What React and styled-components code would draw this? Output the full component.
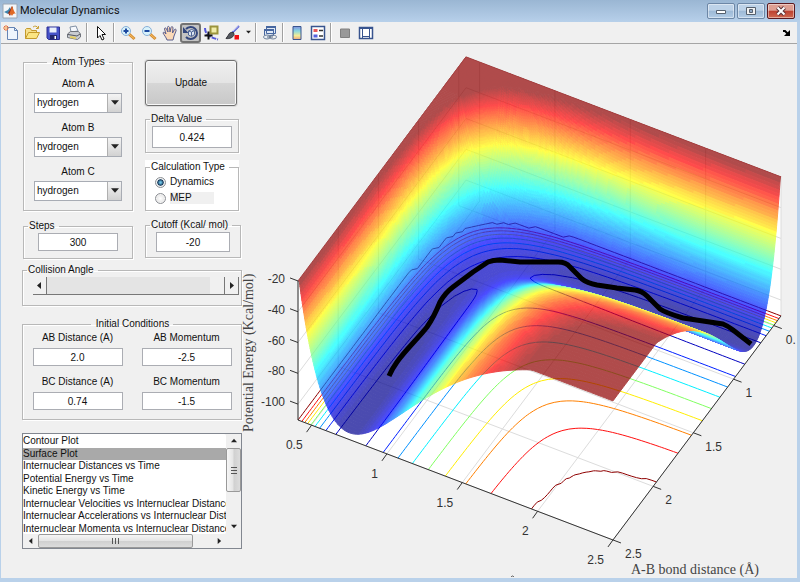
import React, { useState } from 'react'
import styled, { createGlobalStyle, css } from 'styled-components'

const GlobalStyle = createGlobalStyle`
  * { box-sizing: border-box; }
  body {
    margin: 0;
    font-family: "Liberation Sans", Arial, sans-serif;
    font-size: 10px;
    line-height: 14px;
    color: #111;
  }
  button, input, select { font: inherit; color: inherit; }
`

const Window = styled.div`
  display: flex;
  flex-direction: column;
  min-height: 100vh;
  padding: 0 3px 4px 1px;
  background: #b9d1ea;
`

const TitleBar = styled.header`
  display: flex;
  align-items: center;
  height: 22px;
  margin: 0 -3px 0 -1px;
  padding: 0 5px 0 2px;
  gap: 2px;
  background: linear-gradient(#9ab6d3, #b7d0ea);
`

const Title = styled.h1`
  flex: 1;
  margin: 0;
  font: 11px/16px Roboto, sans-serif;
`

const WindowButtons = styled.div`
  display: flex;
  gap: 2px;
  align-self: flex-start;
  padding-top: 3px;
`

const WindowButton = styled.button`
  display: flex;
  align-items: center;
  justify-content: center;
  width: 28px;
  height: 16px;
  padding: 0;
  border: 1px solid ${({ close }) => (close ? '#5b1a20' : '#6d87a6')};
  border-radius: 2px;
  box-shadow: inset 0 0 0 1px rgba(255, 255, 255, 0.45);
  background: ${({ close }) =>
    close
      ? 'linear-gradient(#dd9f92 45%, #bd4030 50%, #cf6950)'
      : 'linear-gradient(#bdd2e8 45%, #9db9d6 50%, #b2cce6)'};
`

const Toolbar = styled.div`
  display: flex;
  align-items: center;
  height: 22px;
  background: #f0f0f0;
  border-bottom: 1px solid #a5a5a5;
`

const Tool = styled.button`
  display: flex;
  align-items: center;
  justify-content: center;
  width: 21px;
  height: 20px;
  padding: 0;
  border: 0;
  background: none;
  ${({ pressed }) =>
    pressed &&
    css`
      border: 2px solid #737373;
      border-radius: 3px;
      background: #c3c3c3;
    `}
`

const DropArrow = styled(Tool)`width: 10px;`

const Separator = styled.span`
  width: 2px;
  height: 19px;
  margin: 0 2px;
  border-left: 1px solid #a0a0a0;
  border-right: 1px solid #fff;
`

const Tools = styled.div`
  display: flex;
  flex: 1;
  align-items: center;
  margin-left: -1px;
`

const Spacer = styled.span`flex: 1;`

const Content = styled.main`
  display: flex;
  flex: 1;
  background: #f0f0f0;
`

const Controls = styled.form`
  display: flex;
  flex-direction: column;
  flex: none;
  width: 241px;
  padding: 11px 0 0 21px;
`

const Columns = styled.div`
  display: grid;
  grid-template-columns: 111px 96px;
  column-gap: 12px;
`

const Column = styled.div`
  display: flex;
  flex-direction: column;
  padding: ${({ inset }) => (inset ? '5px 0 0' : '0 0 0 1px')};
`

const Group = styled.fieldset`
  min-width: 0;
  margin: 0;
  padding: ${({ pad }) => pad};
  border: 1px solid #b8b8b8;
  box-shadow: 1px 1px 0 #fff, inset 1px 1px 0 #fff;
`

const Legend = styled.legend`
  height: 14px;
  margin: ${({ centered }) => (centered ? '0 auto' : '0 0 0 4px')};
  padding: 0 4px 0 1px;
  text-indent: ${({ centered }) => (centered ? '4px' : '0')};
  white-space: nowrap;
`

const AtomGroup = styled(Group)`
  display: flex;
  flex-direction: column;
  align-items: center;
  margin-bottom: 8px;
`

const AtomField = styled.label`
  display: flex;
  flex-direction: column;
  align-items: center;
  gap: 2px;
  margin-top: 8px;
`

const SelectBox = styled.span`
  display: grid;
  grid-template-columns: 72px 14px;
  height: 20px;
  border: 1px solid #a8acb4;
  background: #fff;
`

const Select = styled.select`
  grid-area: 1 / 1 / 2 / 3;
  appearance: none;
  width: 86px;
  padding: 0 14px 0 2px;
  border: 0;
  outline: 0;
  background: none;
`

const SelectArrow = styled.span`
  grid-area: 1 / 2;
  display: flex;
  align-items: center;
  justify-content: center;
  border-left: 1px solid #b0b0b0;
  background: linear-gradient(#f4f4f4, #d2d2d2);
  pointer-events: none;
`

const UpdateButton = styled.button`
  width: 92px;
  height: 46px;
  margin-bottom: 6px;
  border: 1px solid #707070;
  border-radius: 3px;
  box-shadow: inset 0 0 0 1px #f8f8f8, 0 0 0 1px #dcdcdc;
  background: linear-gradient(#f0f0f0, #e4e4e4 49%, #d6d6d6 50%, #c8c8c8);
`

const TextBox = styled.input`
  width: ${({ wide }) => (wide ? '90px' : '80px')};
  height: ${({ tall }) => (tall ? '22px' : '18px')};
  padding: 0;
  border: 1px solid #abadb3;
  background: #fff;
  text-align: center;
`

const CutoffBox = styled(TextBox)`
  width: 74px;
  height: 20px;
`

const SmallGroup = styled(Group)`
  display: flex;
  justify-content: center;
`

const DeltaGroup = styled(SmallGroup)`width: 94px;`

const WhiteBox = styled.div`
  width: 94px;
  margin: 7px 0;
  background: #fff;
`

const RadioLabel = styled.label`
  display: flex;
  align-items: center;
  gap: 4px;
  height: 16px;
  padding-left: 9px;
`

const RadioText = styled.span`
  flex: none;
  width: 44px;
  height: 12px;
  line-height: 12px;
  background: ${({ shaded }) => (shaded ? '#f0f0f0' : 'none')};
`

const Radio = styled.input`
  appearance: none;
  width: 11px;
  height: 11px;
  margin: 0;
  border: 1px solid #8c8f94;
  border-radius: 50%;
  background: radial-gradient(#fff, #d8d8d8);
  box-shadow: inset 0 0 0 1px #f4f4f4;
  &:checked {
    background: radial-gradient(#6fc5e8 10%, #16385a 45%, #dfe7ec 58%);
  }
`

const AngleGroup = styled(Group)`
  margin: 4px 0 11px;
`

const Slider = styled.div`
  display: flex;
  height: 18px;
  margin: 0 2px 0 10px;
  border-bottom: 1px solid #777;
`

const SliderButton = styled.button`
  display: flex;
  align-items: center;
  justify-content: center;
  width: 14px;
  padding: 0;
  border: 0;
  border-right: 1px solid #777;
  background: #f0f0f0;
`

const Range = styled.input`
  appearance: none;
  flex: 1;
  min-width: 0;
  height: 17px;
  margin: 0;
  background: #e4e4e4;
  outline: 0;
  &::-webkit-slider-thumb {
    appearance: none;
    width: 15px;
    height: 17px;
    border-right: 1px solid #777;
    background: #f0f0f0;
  }
`

const Conditions = styled(Group)`margin-bottom: 13px;`

const ConditionGrid = styled.div`
  display: grid;
  grid-template-columns: 1fr 1fr;
  row-gap: 9px;
`

const ConditionField = styled.label`
  display: flex;
  flex-direction: column;
  align-items: center;
  gap: 3px;
`

const ListFrame = styled.div`
  display: grid;
  grid-template-columns: 1fr 15px;
  grid-template-rows: 100px 14px;
  border: 1px solid #828790;
  background: #f0f0f0;
`

const ListBox = styled.select`
  width: 100%;
  height: 100%;
  padding: 1px 0 0;
  border: 0;
  outline: 0;
  overflow: hidden;
  background: #fff;
  scrollbar-width: none;
`

const ListOption = styled.option`
  min-height: 12px;
  height: 12px;
  padding: 0;
  line-height: 12px;
  color: #111;
  &:nth-child(odd) {
    height: 13px;
  }
  &:checked {
    color: #111;
    background: #a9a9a9 linear-gradient(#a9a9a9, #a9a9a9);
  }
`

const ScrollBar = styled.div`
  display: flex;
  flex-direction: ${({ vertical }) => (vertical ? 'column' : 'row')};
`

const ScrollArrow = styled.button`
  display: flex;
  align-items: center;
  justify-content: center;
  flex: none;
  min-width: 15px;
  min-height: 14px;
  padding: 0;
  border: 0;
  background: none;
`

const Thumb = styled.div`
  display: flex;
  align-items: center;
  justify-content: center;
  flex: 0 0 ${({ size }) => size};
  border: 1px solid #999;
  border-radius: 2px;
  background: linear-gradient(
    ${({ vertical }) => (vertical ? 'to right' : 'to bottom')},
    #f6f6f6, #e4e4e4 48%, #d0d0d0 52%, #dcdcdc
  );
`

const ChartArea = styled.div`
  flex: 1;
  min-width: 0;
  overflow: hidden;
`

const ChartSvg = styled.svg`
  display: block;
  width: 100%;
  height: auto;
`

const TickText = styled.text`
  font: 12px "Liberation Sans", Arial, sans-serif;
  fill: #333;
`

const AxisText = styled.text`
  font: 14px "Liberation Serif", "Times New Roman", serif;
  fill: #444;
`

const Triangle = ({ d = 'M0 1h7l-3.500 4z', size = 7 }) =>
  <svg width={size} height={size} viewBox="0 0 7 7">
    <path d={d} fill="#222" />
  </svg>

const UP = 'M0 5h7L3.500 1z'
const LEFT = 'M5 0v7L1 3.500z'
const RIGHT = 'M2 0v7l4-3.500z'

const Icon = ({ children }) =>
  <svg width="16" height="16" viewBox="0 0 16 16" fill="none">
    {children}
  </svg>

const MatlabLogo = () =>
  <Icon>
    <path d="M1 1h14v14H1z" fill="#f4f6f8" stroke="#9aa6b4" />
    <path d="M2 9l4-2 2-3 1 3-3 4z" fill="#3f83ad" />
    <path d="M6 10l2-3 2-4 1 2-3 8z" fill="#8c2a1c" />
    <path d="M10 3c1 2 2 6 4 8-2-1-3 0-4 2-1-2-2-2-3-2 1-1 2-5 3-8z" fill="#e06a26" />
  </Icon>

const NewIcon = () =>
  <Icon>
    <path d="M4.500 2.500h7l3 3v9h-10z" fill="#eef5fd" stroke="#6584b4" />
    <path d="M11.500 2.500v3h3" stroke="#6584b4" />
    <path d="M3 0v6M0 3h6M1 1l4 4M5 1L1 5" stroke="#e8703c" />
    <circle cx="3" cy="3" r="1" fill="#ffe8a0" />
  </Icon>

const OpenIcon = () =>
  <Icon>
    <path d="M1.500 13.500v-9l1-1h4l1 2h5v2" fill="#f7e08c" stroke="#c49a2c" />
    <path d="M1.500 13.500l3-6h11l-3 6z" fill="#fbe583" stroke="#c49a2c" />
    <path d="M9 2c2-1.500 4-1 5 1M14.500 1v2.500H12" stroke="#c9a035" />
  </Icon>

const SaveIcon = () =>
  <Icon>
    <path d="M2 2h12.500v12.500H3.500L2 13z" fill="#4652c8" stroke="#2c2f93" />
    <path d="M4.500 2.500h7v5h-7z" fill="#e9effb" />
    <path d="M5 10h7v4.500H5z" fill="#24276c" />
    <path d="M9.500 11h1.500v3H9.500z" fill="#fff" />
  </Icon>

const PrintIcon = () =>
  <Icon>
    <path d="M5 7l-1-5 6-1 2 5z" fill="#f5f8fd" stroke="#8190a5" />
    <path d="M1.500 9l3-2.500h8l2 2.500v3l-3 2.500-10-2z" fill="#c9ccd1" stroke="#70747c" />
    <path d="M2 9.500l9 1.500 3-2" stroke="#55585f" />
    <path d="M4 12l6 1" stroke="#e5ce62" strokeWidth="2" />
  </Icon>

const CursorIcon = () =>
  <Icon>
    <path d="M4.500 1.500v11.500l2.500-2.500 2 4.500 2-1-2-4.500h3.500z" fill="#fff" stroke="#111" />
  </Icon>

const ZoomIcon = ({ plus }) =>
  <Icon>
    <path d="M9 9l5.500 5" stroke="#d78b2d" strokeWidth="3" />
    <path d="M9 9l5 4.500" stroke="#f5c46c" />
    <circle cx="6" cy="6" r="4.500" fill="#d8f2fb" stroke="#87afd8" />
    <path d="M3.500 6h5" stroke="#1c49a0" strokeWidth="2" />
    {plus && <path d="M6 3.500v5" stroke="#1c49a0" strokeWidth="2" />}
  </Icon>

const HandIcon = () =>
  <Icon>
    <path
      d="M5 15C4 12 2 10 1 8c0-1 1.500-1 3 1L2.500 4c0-1.500 1.500-1.500 2 0L6 7 5.500 2.500C5.500 1 7 1 7.500 2.500L8 7l1-4.500c.5-1.500 2-1 2 .5L10.500 8l2-3.500c1-1 2 0 1.500 1.500L12 11l-1 4z"
      fill="#fbd9b7"
      stroke="#5a5e8e"
    />
  </Icon>

const RotateIcon = () =>
  <Icon>
    <path d="M3 4a6.300 6 0 1 1 0 8" stroke="#33477e" strokeWidth="2" />
    <path d="M0 2v6h5.500z" fill="#33477e" />
    <path d="M5.500 6l3-1.500 3 1v4l-3 2-3-1.500z" stroke="#4f6698" fill="#dce5f2" />
    <path d="M8.500 7v4M5.500 6l3 1 3-1.500" stroke="#4f6698" />
  </Icon>

const DataCursorIcon = () =>
  <Icon>
    <path d="M1 3c0 4 2 7 5 8.500s5 2 8 3" stroke="#5356d8" strokeWidth="2" strokeDasharray="5 1" />
    <path d="M6.500 1.500h7v7h-7z" fill="#f1edaa" stroke="#9b943d" strokeWidth="2" />
    <path d="M4.500 6.500v8M.5 10.500h8" stroke="#111" strokeWidth="2" />
  </Icon>

const BrushIcon = () =>
  <Icon>
    <path d="M14 1L7 8" stroke="#5e66d4" strokeWidth="2" />
    <path d="M13.500 1L8 6" stroke="#cdd0f6" />
    <path d="M8.500 7.500C6 7 4 8 3.500 10L1 13.500c3 .5 7-.5 8-4z" fill="#55585f" stroke="#33353b" />
    <path d="M9.500 10h4.500v4.500H9.500z" fill="#f20d12" />
  </Icon>

const LinkIcon = () =>
  <Icon>
    <path d="M4.500 1.500h9v7h-9zM2.500 4.500h9v6h-9z" fill="#dfe9f5" stroke="#4767a0" />
    <path d="M4 2h10M2 5h10" stroke="#4767a0" strokeWidth="2" />
    <ellipse cx="5" cy="12" rx="3.500" ry="2" fill="#e8eef5" stroke="#71839c" />
    <ellipse cx="11" cy="12" rx="3.500" ry="2" stroke="#71839c" />
    <path d="M5 12h6" stroke="#536680" />
  </Icon>

const ColorbarIcon = () =>
  <Icon>
    <defs>
      <linearGradient id="colorbar" x2="0" y2="1">
        <stop offset="0" stopColor="#8090df" />
        <stop offset=".35" stopColor="#88d8e0" />
        <stop offset=".7" stopColor="#f4ed94" />
        <stop offset="1" stopColor="#eba57e" />
      </linearGradient>
    </defs>
    <path d="M4 1.500h8v13H4z" fill="url(#colorbar)" stroke="#38548e" />
  </Icon>

const LegendIcon = () =>
  <Icon>
    <path d="M1.500 1.500h13v13h-13z" fill="#fff" stroke="#38548e" strokeWidth="1.500" />
    <path d="M3.500 4h4v3h-4z" fill="#e85858" />
    <path d="M3.500 9.500h4v3h-4z" fill="#5460df" />
    <path d="M9 5.500h4M9 11h4" stroke="#333" strokeWidth="1.500" />
  </Icon>

const HideIcon = () =>
  <Icon>
    <path d="M3.500 4h9v8.500h-9z" fill="#999" stroke="#808080" />
  </Icon>

const ShowIcon = () =>
  <Icon>
    <path d="M1.500 2.500h13v11h-13z" fill="#fff" stroke="#38548e" strokeWidth="1.500" />
    <path d="M1 3h14" stroke="#38548e" strokeWidth="2" />
    <path d="M4.500 4v9M11.500 4v9M4 11.500h8" stroke="#38548e" />
  </Icon>

// London-Eyring-Polanyi-Sato surface for collinear H + H2, in kcal/mol
const DEPTH = 106
const BETA = 1.936
const R_EQ = 0.75
const SATO = 0.183
const CUTOFF = -20
const FLOOR = -110.3
const R_MIN = 0.41
const R_MAX = 2.5

const pair = r => {
  const e = Math.exp(-BETA * (r - R_EQ))
  const k = DEPTH / (4 * (1 + SATO))
  return [
    k * ((3 + SATO) * e * e - (2 + 6 * SATO) * e),
    k * ((1 + 3 * SATO) * e * e - (6 + 2 * SATO) * e)
  ]
}

const energy = (a, b) => {
  const [q1, j1] = pair(a)
  const [q2, j2] = pair(b)
  const [q3, j3] = pair(a + b)
  const exchange = Math.sqrt(((j1 - j2) ** 2 + (j2 - j3) ** 2 + (j1 - j3) ** 2) / 2)
  return Math.min(CUTOFF, q1 + q2 + q3 - exchange)
}

const project = (a, b, z = FLOOR) => [
  298 + (a - R_MIN) * 150.7 + (R_MAX - b) * 80.4,
  421 + (a - R_MIN) * 57.4 - (R_MAX - b) * 107.2 - (z - FLOOR) * 1.54
]

const point = (...args) => project(...args).map(n => n.toFixed(2)).join(' ')

const jet = t => {
  const channel = c => Math.round(255 * Math.max(0, Math.min(1, 1.5 - Math.abs(4 * t - c))))
  return `rgb(${channel(3)},${channel(2)},${channel(1)})`
}

const range = (from, to, count) =>
  Array.from({ length: count }, (_, i) => from + (to - from) * i / count)

// The repulsive walls are steep, so short distances get a finer mesh
const mesh = [...range(R_MIN, 0.7, 90), ...range(0.7, 1.2, 40), ...range(1.2, R_MAX, 52), R_MAX]

const surface = []
for (let j = 0; j < mesh.length - 1; j++) {
  const [b0, b1] = [mesh[j], mesh[j + 1]]
  const bandAt = i => {
    const z = energy((mesh[i] + mesh[i + 1]) / 2, (b0 + b1) / 2)
    return Math.min(63, 1 + Math.floor((z + DEPTH) / (CUTOFF + DEPTH) * 64))
  }
  let start = 0
  for (let i = 0; i < mesh.length - 1; i++) {
    const band = bandAt(i)
    if (i + 1 < mesh.length - 1 && bandAt(i + 1) === band) continue
    const run = mesh.slice(start, i + 2)
    const far = run.map(a => point(a, b0, energy(a, b0)))
    const near = run.map(a => point(a, b1, energy(a, b1))).reverse()
    surface.push({ d: `M${far.join('L')}L${near.join('L')}Z`, color: jet(band / 64) })
    start = i + 1
  }
}

const contour = level => {
  const n = 70
  const r = i => R_MIN + (R_MAX - R_MIN) * i / n
  let d = ''
  for (let i = 0; i < n; i++) {
    for (let j = 0; j < n; j++) {
      const corners = [[i, j], [i + 1, j], [i + 1, j + 1], [i, j + 1]].map(([p, q]) => [r(p), r(q), energy(r(p), r(q))])
      const hits = []
      corners.forEach((c, k) => {
        const e = corners[(k + 1) % 4]
        if (c[2] < level === e[2] < level) return
        const t = (level - c[2]) / (e[2] - c[2])
        hits.push(point(c[0] + t * (e[0] - c[0]), c[1] + t * (e[1] - c[1])))
      })
      if (hits.length > 1) d += `M${hits[0]}L${hits[1]}`
    }
  }
  return d
}

const contours = [
  [-102, '#0000bf'], [-92.7, '#0020ff'], [-83, '#0090ff'], [-73.3, '#00f0ff'], [-62.9, '#80ff60'],
  [-52.8, '#ffee00'], [-42.3, '#ff8000'], [-31.8, '#ff1010'], [-20.1, '#8f0000']
].map(([level, color]) => ({ color, d: contour(level) }))

const bondTicks = [0.5, 1, 1.5, 2, 2.5]
const energyTicks = [-20, -40, -60, -80, -100]

const gridLines = [
  ...bondTicks.map(r => `M${point(r, R_MAX)}L${point(r, R_MIN)}L${point(r, R_MIN, CUTOFF)}`),
  ...bondTicks.map(r => `M${point(R_MAX, r)}L${point(R_MIN, r)}L${point(R_MIN, r, CUTOFF)}`),
  ...energyTicks.map(z => `M${point(R_MIN, R_MAX, z)}L${point(R_MIN, R_MIN, z)}L${point(R_MAX, R_MIN, z)}`)
].join('')

const box = 'M' + [
  point(R_MIN, R_MAX), point(R_MIN, R_MAX, CUTOFF), point(R_MIN, R_MIN, CUTOFF),
  point(R_MAX, R_MIN, CUTOFF), point(R_MAX, R_MIN), point(R_MAX, R_MAX)
].join('L') + 'Z'

const axes = `M${point(R_MIN, R_MAX, CUTOFF)}L${point(R_MIN, R_MAX)}L${point(R_MAX, R_MAX)}L${point(R_MAX, R_MIN)}`

const trajectory =
  'M389 377Q392 370 397 363T413 344T427 328Q434 318 440 303Q445 294 453 288L473 273L488 263Q493 261 500 261L520 263H558Q566 263 570 268L582 280Q587 284 597 286L617 289L635 291Q642 292 647 297L660 310Q666 314 683 319L703 322L723 325Q728 327 733 331L751 345'

const Chart = () =>
  <ChartSvg viewBox="242 45 555 533" role="img" aria-label="Potential energy surface">
    <path d={box} fill="#fff" />
    <path d={gridLines} stroke="#dcdcdc" fill="none" />
    {contours.map(({ d, color }) =>
      <path key={color} d={d} stroke={color} fill="none" />
    )}
    <g opacity="0.7" strokeLinejoin="round">
      {surface.map(({ d, color }, i) =>
        <path key={i} d={d} fill={color} stroke={color} />
      )}
    </g>
    <path d={trajectory} stroke="#000" strokeWidth="5" strokeLinejoin="round" fill="none" />
    <path d={axes} stroke="#333" fill="none" />
    {energyTicks.map(z => {
      const [x, y] = project(R_MIN, R_MAX, z)
      return (
        <g key={z}>
          <path d={`M${x} ${y}l-8-3`} stroke="#333" />
          <TickText x={x - 13} y={y + 2} textAnchor="end">{z}</TickText>
        </g>
      )
    })}
    {bondTicks.map(r => {
      const [x, y] = project(r, R_MAX)
      return (
        <g key={r}>
          <path d={`M${x} ${y}l-5 7`} stroke="#333" />
          <TickText x={x - 9} y={y + 24} textAnchor="end">{r}</TickText>
        </g>
      )
    })}
    {bondTicks.map(r => {
      const [x, y] = project(R_MAX, r)
      return (
        <g key={r}>
          <path d={`M${x} ${y}l8 3`} stroke="#333" />
          <TickText x={x + 12} y={y + 18}>{r === 0.5 ? '0.' : r}</TickText>
        </g>
      )
    })}
    <AxisText x="631" y="575">A-B bond distance (Å)</AxisText>
    <AxisText transform="translate(253 433) rotate(-90)">Potential Energy (Kcal/mol)</AxisText>
    <path d="M511 578q1.500-2 3 0" stroke="#555" fill="none" />
  </ChartSvg>

const AtomSelect = ({ name }) =>
  <AtomField>
    Atom {name}
    <SelectBox>
      <Select defaultValue="hydrogen">
        <option>hydrogen</option>
      </Select>
      <SelectArrow><Triangle size={8} /></SelectArrow>
    </SelectBox>
  </AtomField>

const Condition = ({ label, value }) =>
  <ConditionField>
    {label}
    <TextBox wide="true" defaultValue={value} />
  </ConditionField>

const plots = [
  'Contour Plot',
  'Surface Plot',
  'Internuclear Distances vs Time',
  'Potential Energy vs Time',
  'Kinetic Energy vs Time',
  'Internuclear Velocities vs Internuclear Distance',
  'Internuclear Accelerations vs Internuclear Distance',
  'Internuclear Momenta vs Internuclear Distance'
]

const App = () => {
  const [mode, setMode] = useState('Dynamics')
  return (
    <Window>
      <GlobalStyle />
      <TitleBar>
        <MatlabLogo />
        <Title>Molecular Dynamics</Title>
        <WindowButtons>
          <WindowButton aria-label="Minimize">
            <svg width="12" height="8" viewBox="0 0 12 8">
              <path d="M1.500 3.500h9v3h-9z" fill="#fff" stroke="#55606e" />
            </svg>
          </WindowButton>
          <WindowButton aria-label="Maximize">
            <svg width="10" height="8" viewBox="0 0 10 8">
              <path d="M.5.5h9v7h-9z" fill="#f2f2f2" stroke="#55606e" />
              <path d="M3.500 2.500h3v3h-3z" fill="#8fa8c4" stroke="#55606e" />
            </svg>
          </WindowButton>
          <WindowButton close="true" aria-label="Close">
            <svg width="12" height="10" viewBox="0 0 12 10">
              <path d="M2.500 1.500l7 7M9.500 1.500l-7 7" stroke="#5c3338" strokeWidth="4" />
              <path d="M2.500 1.500l7 7M9.500 1.500l-7 7" stroke="#fff" strokeWidth="2" />
            </svg>
          </WindowButton>
        </WindowButtons>
      </TitleBar>
      <Toolbar>
        <Tools>
          <Tool aria-label="New figure"><NewIcon /></Tool>
          <Tool aria-label="Open"><OpenIcon /></Tool>
          <Tool aria-label="Save"><SaveIcon /></Tool>
          <Tool aria-label="Print"><PrintIcon /></Tool>
          <Separator />
          <Tool aria-label="Edit plot"><CursorIcon /></Tool>
          <Separator />
          <Tool aria-label="Zoom in"><ZoomIcon plus /></Tool>
          <Tool aria-label="Zoom out"><ZoomIcon /></Tool>
          <Tool aria-label="Pan"><HandIcon /></Tool>
          <Tool aria-label="Rotate 3D" pressed="true"><RotateIcon /></Tool>
          <Tool aria-label="Data cursor"><DataCursorIcon /></Tool>
          <Tool aria-label="Brush"><BrushIcon /></Tool>
          <DropArrow aria-label="Brush options"><Triangle size={5} /></DropArrow>
          <Separator />
          <Tool aria-label="Link plot"><LinkIcon /></Tool>
          <Separator />
          <Tool aria-label="Insert colorbar"><ColorbarIcon /></Tool>
          <Tool aria-label="Insert legend"><LegendIcon /></Tool>
          <Separator />
          <Tool aria-label="Hide plot tools"><HideIcon /></Tool>
          <Tool aria-label="Show plot tools"><ShowIcon /></Tool>
        </Tools>
        <Tool aria-label="Dock figure">
          <svg width="8" height="8" viewBox="0 0 8 8">
            <path d="M0 2h2l3 3" stroke="#000" strokeWidth="2" fill="none" />
            <path d="M7 1v6H1z" fill="#000" />
          </svg>
        </Tool>
      </Toolbar>
      <Content>
        <Controls onSubmit={e => e.preventDefault()}>
          <Columns>
            <Column>
              <AtomGroup pad="0 0 9px">
                <Legend centered="true">Atom Types</Legend>
                <AtomSelect name="A" />
                <AtomSelect name="B" />
                <AtomSelect name="C" />
              </AtomGroup>
              <SmallGroup pad="0 0 7px">
                <Legend>Steps</Legend>
                <TextBox aria-label="Steps" defaultValue="300" />
              </SmallGroup>
            </Column>
            <Column inset="true">
              <UpdateButton>Update</UpdateButton>
              <DeltaGroup pad="0 0 4px">
                <Legend>Delta Value</Legend>
                <TextBox tall="true" aria-label="Delta Value" defaultValue="0.424" />
              </DeltaGroup>
              <WhiteBox>
                <Group pad="0 0 4px">
                  <Legend>Calculation Type</Legend>
                  {['Dynamics', 'MEP'].map(name =>
                    <RadioLabel key={name}>
                      <Radio type="radio" name="mode" checked={mode === name} onChange={() => setMode(name)} />
                      <RadioText shaded={name === 'MEP' ? 'true' : undefined}>{name}</RadioText>
                    </RadioLabel>
                  )}
                </Group>
              </WhiteBox>
              <SmallGroup pad="0 0 5px">
                <Legend>Cutoff (Kcal/ mol)</Legend>
                <CutoffBox aria-label="Cutoff (Kcal/ mol)" defaultValue="-20" />
              </SmallGroup>
            </Column>
          </Columns>
          <AngleGroup pad="0 0 10px">
            <Legend>Collision Angle</Legend>
            <Slider>
              <SliderButton aria-label="Decrease angle"><Triangle d={LEFT} /></SliderButton>
              <Range type="range" aria-label="Collision Angle" min="0" max="180" defaultValue="180" />
              <SliderButton aria-label="Increase angle"><Triangle d={RIGHT} /></SliderButton>
            </Slider>
          </AngleGroup>
          <Conditions pad="0 0 9px">
            <Legend centered="true">Initial Conditions</Legend>
            <ConditionGrid>
              <Condition label="AB Distance (A)" value="2.0" />
              <Condition label="AB Momentum" value="-2.5" />
              <Condition label="BC Distance (A)" value="0.74" />
              <Condition label="BC Momentum" value="-1.5" />
            </ConditionGrid>
          </Conditions>
          <ListFrame>
            <ListBox size={8} aria-label="Plot type" defaultValue="Surface Plot">
              {plots.map(plot => <ListOption key={plot}>{plot}</ListOption>)}
            </ListBox>
            <ScrollBar vertical="true">
              <ScrollArrow aria-label="Scroll up"><Triangle d={UP} size={6} /></ScrollArrow>
              <Thumb vertical="true" size="44px">
                <svg width="6" height="7" viewBox="0 0 6 7">
                  <path d="M0 .5h6M0 3.500h6M0 6.500h6" stroke="#555" />
                </svg>
              </Thumb>
              <Spacer />
              <ScrollArrow aria-label="Scroll down"><Triangle size={6} /></ScrollArrow>
            </ScrollBar>
            <ScrollBar>
              <ScrollArrow aria-label="Scroll left"><Triangle d={LEFT} size={6} /></ScrollArrow>
              <Thumb size="155px">
                <svg width="7" height="6" viewBox="0 0 7 6">
                  <path d="M.5 0v6M3.500 0v6M6.500 0v6" stroke="#555" />
                </svg>
              </Thumb>
              <Spacer />
              <ScrollArrow aria-label="Scroll right"><Triangle d={RIGHT} size={6} /></ScrollArrow>
            </ScrollBar>
          </ListFrame>
        </Controls>
        <ChartArea>
          <Chart />
        </ChartArea>
      </Content>
    </Window>
  )
}

export default App
